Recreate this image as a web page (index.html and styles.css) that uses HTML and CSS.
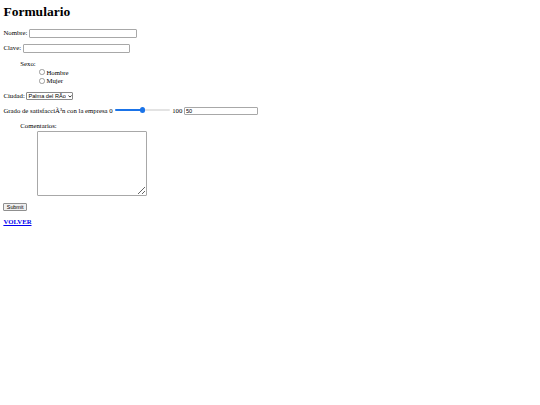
FILE: index.html
```html
<!DOCTYPE html>
<html>
<head>
<meta charset="utf-8">
<title>Formulario</title>
<link rel="stylesheet" href="styles.css">
</head>
<body>
<h1 class="title">Formulario</h1>
<form class="form">
  <p class="row">Nombre: <input class="text long" type="text"></p>
  <p class="row">Clave: <input class="text long" type="password"></p>
  <div class="group">
    <div class="label">Sexo:</div>
    <div class="inner">
      <label class="opt"><input class="radio" type="radio" name="sexo"> Hombre</label>
      <label class="opt"><input class="radio" type="radio" name="sexo"> Mujer</label>
    </div>
  </div>
  <p class="row">Ciudad: <span class="select-wrap"><select class="select"><option>Palma del RÃ­o</option></select><svg class="chev" viewBox="0 0 10 6" width="4" height="2.6"><path d="M1 1 L5 5 L9 1" fill="none" stroke="#000" stroke-width="2"/></svg></span></p>
  <p class="row">Grado de satisfacciÃ³n con la empresa 0 <input class="range" type="range" min="0" max="100" value="50"> 100 <input class="text short" type="text" value="50"></p>
  <div class="group">
    <div class="label">Comentarios:</div>
    <div class="inner"><textarea class="area"></textarea></div>
  </div>
  <p class="row"><input class="submit" type="submit" value="Submit"></p>
</form>
<p class="row"><a class="back" href="#">VOLVER</a></p>
</body>
</html>
```

FILE: styles.css
```css
html {
  background: #fff;
}
body {
  margin: 3.4px;
  font-family: "Liberation Serif", "Times New Roman", serif;
  font-size: 6.75px;
  color: #000;
}
.title {
  margin: 0 0 9px;
  padding-top: 0.8px;
  font-size: 13.5px;
  font-weight: bold;
}
.form {
  margin: 0;
}
.row {
  margin: 6.75px 0;
}
.text {
  font-family: "Liberation Sans", Arial, sans-serif;
  font-size: 5.6px;
  border: 1px solid #a8a8a8;
  border-radius: 1px;
  padding: 0 1px;
  height: 8.5px;
  box-sizing: border-box;
  vertical-align: baseline;
  margin: 0;
}
.long {
  width: 107.5px;
}
.short {
  width: 74.5px;
}
.group {
  margin: 6.75px 0 6.75px 16.9px;
}
.label {
  line-height: 8px;
}
.inner {
  margin-left: 16.9px;
}
.opt {
  display: flex;
  align-items: center;
  height: 8.8px;
}
.radio {
  appearance: none;
  width: 5.4px;
  height: 5.4px;
  margin: 0 1.8px 0 2.1px;
  border: 0.8px solid #9a9a9a;
  border-radius: 50%;
  box-sizing: border-box;
  background: #fff;
}
.select-wrap {
  position: relative;
  display: inline-block;
  vertical-align: baseline;
}
.select {
  appearance: none;
  font-family: "Liberation Sans", Arial, sans-serif;
  font-size: 5.6px;
  color: #000;
  background: #fff;
  border: 1px solid #8a8a8a;
  border-radius: 1px;
  height: 8px;
  padding: 0 6px 0 1px;
  margin: 0;
  box-sizing: border-box;
  width: 47px;
}
.chev {
  position: absolute;
  right: 1.6px;
  top: 3px;
  pointer-events: none;
}
.range {
  appearance: none;
  width: 54.4px;
  height: 2px;
  margin: 0 0.9px;
  border-radius: 1px;
  background: linear-gradient(to right, #1a73e8 0, #1a73e8 50%, #e3e3e3 50%, #e3e3e3 100%);
  vertical-align: 2.2px;
}
.range::-webkit-slider-thumb {
  appearance: none;
  width: 5.6px;
  height: 5.6px;
  border-radius: 50%;
  background: #1a73e8;
}
.area {
  display: block;
  width: 110px;
  height: 65.5px;
  box-sizing: border-box;
  border: 1px solid #a8a8a8;
  border-radius: 1px;
  margin: 0.5px 0 0;
  resize: both;
}
.submit {
  font-family: "Liberation Sans", Arial, sans-serif;
  font-size: 5.4px;
  padding: 0 2.4px;
  height: 8px;
  border: 1px solid #8f8f8f;
  border-radius: 1px;
  background: #efefef;
  color: #000;
  margin: 0;
}
.back {
  font-weight: bold;
  color: #0000ee;
}
```
